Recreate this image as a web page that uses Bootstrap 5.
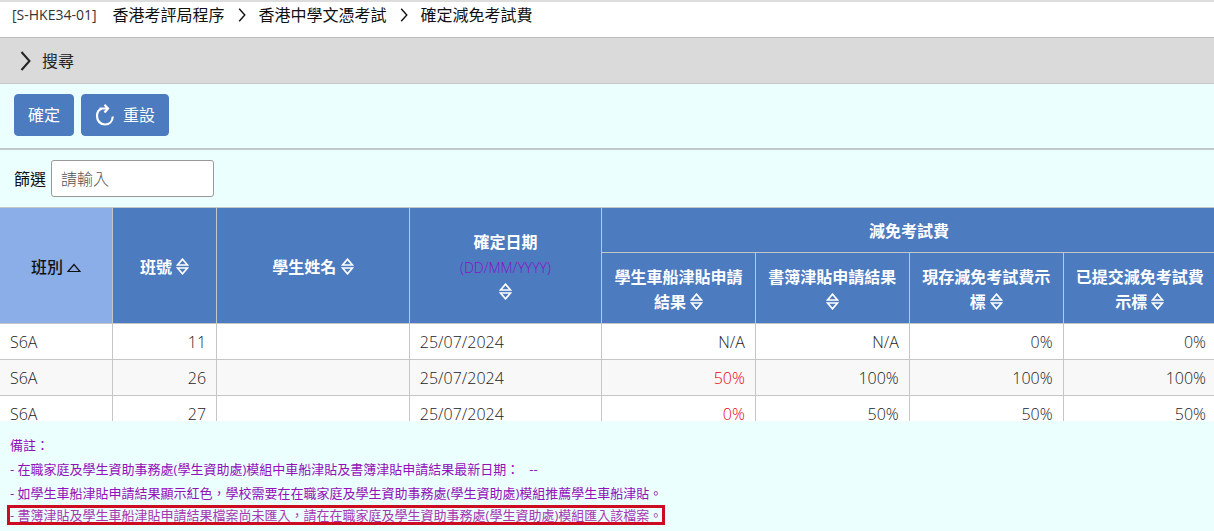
<!DOCTYPE html>
<html lang="zh-Hant">
<head>
<meta charset="utf-8">
<meta name="viewport" content="width=device-width, initial-scale=1">
<title>確定減免考試費</title>
<link href="https://cdn.jsdelivr.net/npm/bootstrap@5.3.0/dist/css/bootstrap.min.css" rel="stylesheet">
<style>
body{font-family:"Open Sans","Noto Sans CJK TC",sans-serif;font-size:16px;font-weight:300;line-height:24px;color:#222;background:#ebffff}
.crumbs{background:#fff;border-bottom:1px solid #bbb;border-top:2px solid #ddd;padding:0 12px 8px;height:38px}
.crumbs ol{gap:13px;line-height:26px;color:#111}
.crumbs a,.crumbs span{color:inherit;text-decoration:none;font-weight:400}
.crumbs .code{font-size:14px;color:#333}
.search-bar{background:#dadada;color:#222;border:0;border-bottom:1px solid #c4c8c8;height:46px;padding:0 20px;font-weight:400;gap:11px}
.btn-main{--bs-btn-color:#fff;--bs-btn-bg:#4c7bbf;--bs-btn-border-color:#4c7bbf;--bs-btn-hover-color:#fff;--bs-btn-hover-bg:#3f6cac;--bs-btn-border-radius:4px;--bs-btn-padding-x:13px;height:42px;font-weight:400;line-height:24px}
.tools{padding:10px 14px 12px;gap:7px;border-bottom:2px solid #bfc9c9}
.filter{padding:10px 14px;gap:5px;color:#111}
.filter label{font-weight:400}
.filter input{width:163px;height:37px;border:1px solid #999;border-radius:3px;padding:0 9px;font-size:16px;font-weight:300}
.filter input::placeholder{color:#555}
.grid-wrap{height:214px;overflow:hidden}
.fees{min-width:1217px;width:100%;table-layout:fixed;border-collapse:collapse;margin:0}
.fees th,.fees td{border:1px solid #c6c6c6}
.fees th:first-child,.fees td:first-child{border-left:0}
.fees th{background:#4c7bbf;color:#fff;text-align:center;vertical-align:middle;font-weight:700;line-height:25px;padding:11px 11px 8px}
.fees th svg{vertical-align:-2px}
.fees th.sorted{background:#8caee8;color:#111;font-weight:500}
.fees th.sorted svg{vertical-align:0}
.fees thead tr:first-child{height:45px}
.fees thead tr:last-child{height:71px}
.fees thead tr:last-child th:first-child{border-left:1px solid #c6c6c6}
.fees td{height:36px;padding:3px 10px;background:#fff;color:#222;font-size:16px}
.fees tbody tr:nth-child(even) td{background:#f8f8f8}
.fees td.num{text-align:right}
.fees tbody td.low{color:#f00010}
.fmt{color:#8a10c8;font-size:14px;font-weight:300}
.notes{color:#9410b8;font-size:13px;font-weight:400;line-height:24px;padding:12px 7px 0}
.notes p{margin:0;padding:0 3px}
.notes .alert-line{width:fit-content;border:3px solid #cc0c20;line-height:14px;white-space:nowrap;color:#a838b0}
</style>
</head>
<body>
<svg class="d-none" aria-hidden="true">
<symbol id="sort" viewBox="0 0 13 17"><path d="M1.5 7 6.5 1.2 11.5 7ZM1.5 10h10L6.500 15.800Z" fill="none" stroke="currentColor" stroke-width="1.700"/></symbol>
<symbol id="up" viewBox="0 0 14 10"><path d="M1 8.500 7 1.500 13 8.500Z" fill="none" stroke="currentColor" stroke-width="1.200"/></symbol>
<symbol id="chev" viewBox="0 0 10 20"><path d="M1 1 9 10 1 19" fill="none" stroke="currentColor" stroke-width="2"/></symbol>
</svg>
<nav class="crumbs" aria-label="breadcrumb">
<ol class="list-unstyled d-flex align-items-center mb-0">
<li class="d-flex gap-3"><span class="code">[S-HKE34-01]</span><a href="#">香港考評局程序</a></li>
<li class="d-flex"><svg width="8" height="14"><use href="#chev"/></svg></li>
<li><a href="#">香港中學文憑考試</a></li>
<li class="d-flex"><svg width="8" height="14"><use href="#chev"/></svg></li>
<li aria-current="page"><span>確定減免考試費</span></li>
</ol>
</nav>
<button type="button" class="search-bar d-flex align-items-center w-100"><svg width="11" height="20"><use href="#chev"/></svg>搜尋</button>
<div class="tools d-flex">
<button type="button" class="btn btn-main">確定</button>
<button type="button" class="btn btn-main d-flex align-items-center gap-2"><svg width="20" height="22" viewBox="0 0 20 22" fill="none" stroke="currentColor" stroke-width="2.200"><path d="M7 4.500C3.800 5.500 2 8.200 2 12c0 5 3.500 8.500 8 8.500s7.500-3.500 7.800-8M4.500 4.500h8M9.500 .8l3.500 3.700-3.500 4"/></svg>重設</button>
</div>
<div class="filter d-flex align-items-center">
<label for="filter">篩選</label><input id="filter" type="text" placeholder="請輸入">
</div>
<div class="grid-wrap">
<table class="fees">
<colgroup><col style="width:9.250%"><col style="width:8.550%"><col style="width:15.850%"><col style="width:15.800%"><col style="width:12.650%"><col style="width:12.650%"><col style="width:12.650%"><col></colgroup>
<thead>
<tr>
<th rowspan="2" class="sorted" aria-sort="ascending">班別 <svg width="14" height="10"><use href="#up"/></svg></th>
<th rowspan="2">班號 <svg width="13" height="17"><use href="#sort"/></svg></th>
<th rowspan="2">學生姓名 <svg width="13" height="17"><use href="#sort"/></svg></th>
<th rowspan="2">確定日期<br><span class="fmt">(DD/MM/YYYY)</span><br><svg width="13" height="17"><use href="#sort"/></svg></th>
<th colspan="4">減免考試費</th>
</tr>
<tr>
<th>學生車船津貼申請結果 <svg width="13" height="17"><use href="#sort"/></svg></th>
<th>書簿津貼申請結果 <svg width="13" height="17"><use href="#sort"/></svg></th>
<th>現存減免考試費示標 <svg width="13" height="17"><use href="#sort"/></svg></th>
<th>已提交減免考試費示標 <svg width="13" height="17"><use href="#sort"/></svg></th>
</tr>
</thead>
<tbody>
<tr><td>S6A</td><td class="num">11</td><td></td><td>25/07/2024</td><td class="num">N/A</td><td class="num">N/A</td><td class="num">0%</td><td class="num">0%</td></tr>
<tr><td>S6A</td><td class="num">26</td><td></td><td>25/07/2024</td><td class="num low">50%</td><td class="num">100%</td><td class="num">100%</td><td class="num">100%</td></tr>
<tr><td>S6A</td><td class="num">27</td><td></td><td>25/07/2024</td><td class="num low">0%</td><td class="num">50%</td><td class="num">50%</td><td class="num">50%</td></tr>
</tbody>
</table>
</div>
<section class="notes">
<p>備註：</p>
<p>- 在職家庭及學生資助事務處(學生資助處)模組中車船津貼及書簿津貼申請結果最新日期： &nbsp; --</p>
<p>- 如學生車船津貼申請結果顯示紅色，學校需要在在職家庭及學生資助事務處(學生資助處)模組推薦學生車船津貼。</p>
<div class="alert-line">- 書簿津貼及學生車船津貼申請結果檔案尚未匯入，請在在職家庭及學生資助事務處(學生資助處)模組匯入該檔案。</div>
</section>
<script src="https://cdn.jsdelivr.net/npm/bootstrap@5.3.0/dist/js/bootstrap.bundle.min.js"></script>
</body>
</html>
